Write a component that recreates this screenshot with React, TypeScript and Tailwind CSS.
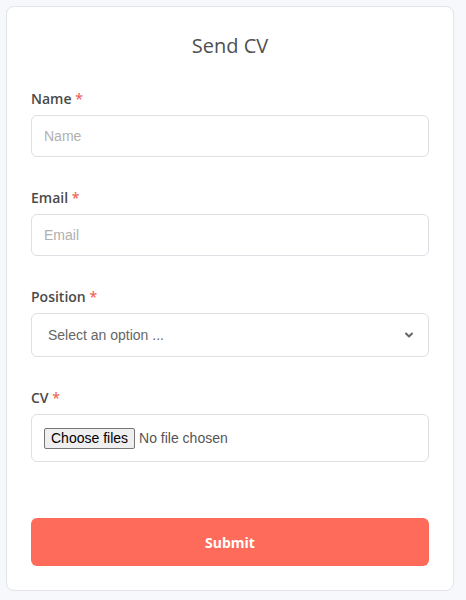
import React from 'react';

const labelCls = "block mb-[6px] text-[14px] font-semibold text-[#4a4a4a] font-['Open_Sans',sans-serif] leading-[20px]";
const inputCls = "w-full h-[42px] px-[12px] rounded-[6px] border border-[#dcdfe4] bg-white text-[14px] font-['Liberation_Sans',Arial,sans-serif] placeholder:text-[#b0b0b0] outline-none";

function Label({ children }: { children: React.ReactNode }) {
  return (
    <label className={labelCls}>
      {children} <span className="text-[#f0695a]">*</span>
    </label>
  );
}

export default function App() {
  return (
    <div className="min-h-screen bg-[#f7f8fc] pt-[6px] pl-[6px]">
      <div className="w-[448px] h-[585px] bg-white border border-[#e1e4ea] rounded-[8px] px-[24px] pt-[25px]">
        <h2 className="text-center text-[20px] text-[#505050] font-['Open_Sans',sans-serif] leading-[28px]">Send CV</h2>

        <form className="mt-[29px]" onSubmit={(e) => e.preventDefault()}>
          <div>
            <Label>Name</Label>
            <input type="text" placeholder="Name" className={inputCls} />
          </div>

          <div className="mt-[31px]">
            <Label>Email</Label>
            <input type="email" placeholder="Email" className={inputCls} />
          </div>

          <div className="mt-[31px]">
            <Label>Position</Label>
            <div className="relative">
              <select
                defaultValue=""
                className="appearance-none w-full h-[44px] pl-[16px] pr-[40px] rounded-[6px] border border-[#dcdfe4] bg-white text-[14px] text-[#666] font-['Liberation_Sans',Arial,sans-serif] outline-none"
              >
                <option value="" disabled>Select an option ...</option>
                <option>Developer</option>
                <option>Designer</option>
              </select>
              <svg className="absolute right-[14px] top-1/2 -translate-y-1/2 w-[12px] h-[12px] text-[#666] pointer-events-none" viewBox="0 0 12 12" fill="none" stroke="currentColor" strokeWidth="2" strokeLinecap="round" strokeLinejoin="round">
                <path d="M3 4.5l3 3 3-3" />
              </svg>
            </div>
          </div>

          <div className="mt-[31px]">
            <Label>CV</Label>
            <label className="h-[48px] px-[12px] flex items-center gap-[4px] rounded-[6px] border border-[#dcdfe4] bg-white text-[14px] font-['Liberation_Sans',Arial,sans-serif] cursor-pointer">
              <input type="file" multiple className="hidden" />
              <span className="px-[6px] h-[21px] leading-[19px] border border-[#767676] rounded-[2px] bg-[#efefef] text-black">Choose files</span>
              <span className="text-[#555]">No file chosen</span>
            </label>
          </div>

          <button
            type="submit"
            className="mt-[56px] w-full h-[48px] rounded-[6px] bg-[#ff6b5a] text-white text-[14px] font-bold font-['Open_Sans',sans-serif]"
          >
            Submit
          </button>
        </form>
      </div>
    </div>
  );
}
